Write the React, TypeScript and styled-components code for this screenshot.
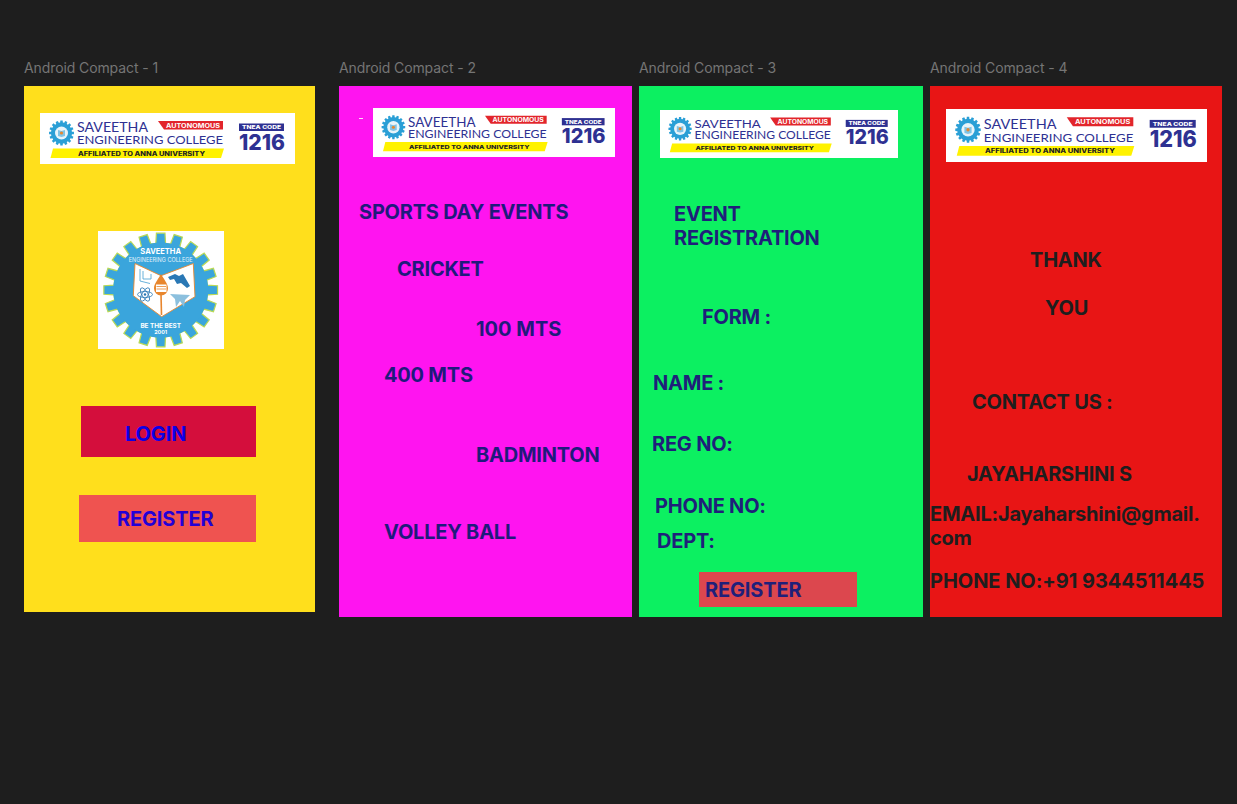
import React from 'react';
import styled, { createGlobalStyle } from 'styled-components';

const GlobalStyle = createGlobalStyle`
  html, body {
    margin: 0;
    padding: 0;
    background: #1e1e1e;
  }
  body {
    font-family: Inter, "Liberation Sans", sans-serif;
  }
`;

const Canvas = styled.div`
  display: flex;
  align-items: flex-start;
  width: 1237px;
  height: 804px;
  box-sizing: border-box;
  padding: 59px 0 0 24px;
  overflow: hidden;
  background: #1e1e1e;
`;

const Artboard = styled.div<{ $w: number; $gap: number }>`
  display: flex;
  flex-direction: column;
  flex: none;
  width: ${p => p.$w}px;
  margin-right: ${p => p.$gap}px;
`;

const FrameName = styled.div`
  height: 27px;
  font-size: 14px;
  line-height: 18px;
  letter-spacing: -0.1px;
  color: #757575;
  white-space: nowrap;
`;

const Frame = styled.section<{ $h: number; $bg: string; $ink: string }>`
  display: flex;
  flex-direction: column;
  align-items: flex-start;
  height: ${p => p.$h}px;
  background: ${p => p.$bg};
  color: ${p => p.$ink};
`;

const Caption = styled.div<{ $left: number; $top: number; $track?: number }>`
  margin: ${p => p.$top}px 0 0 ${p => p.$left}px;
  font-size: 20px;
  font-weight: 700;
  line-height: 24px;
  letter-spacing: ${p => p.$track ?? -0.22}px;
  white-space: pre;
`;

const HeaderRow = styled.div<{ $top: number }>`
  display: flex;
  align-items: flex-start;
  margin-top: ${p => p.$top}px;
`;

const Tick = styled.div`
  flex: none;
  width: 4px;
  height: 1px;
  margin: 10px 10px 0 20px;
  background: #ffd9fb;
`;

const ActionButton = styled.div<{ $left: number; $top: number; $w: number; $h: number; $bg: string; $pad: number; $drop: number; $ink: string }>`
  display: flex;
  align-items: center;
  box-sizing: border-box;
  width: ${p => p.$w}px;
  height: ${p => p.$h}px;
  margin: ${p => p.$top}px 0 0 ${p => p.$left}px;
  padding: ${p => p.$drop}px 0 0 ${p => p.$pad}px;
  background: ${p => p.$bg};
  color: ${p => p.$ink};
  font-size: 20px;
  font-weight: 700;
  letter-spacing: -0.15px;
`;

const BannerBox = styled.div<{ $left: number; $top: number; $w: number; $h: number }>`
  flex: none;
  width: ${p => p.$w}px;
  height: ${p => p.$h}px;
  margin: ${p => p.$top}px 0 0 ${p => p.$left}px;
  background: #ffffff;

  svg {
    display: block;
    width: 100%;
    height: 100%;
  }
`;

const EmblemBox = styled.div`
  flex: none;
  width: 126px;
  height: 118px;
  margin: 67px 0 0 74px;
  background: #ffffff;

  svg {
    display: block;
    width: 100%;
    height: 100%;
  }
`;

// gear outline, used big on the emblem and small on the banners
const gearPath = (cx: number, cy: number, outer: number, inner: number, teeth: number) => {
  const pts: string[] = [];
  for (let i = 0; i < teeth; i++) {
    const a = (i / teeth) * Math.PI * 2 - Math.PI / 2;
    const s = (Math.PI * 2) / teeth;
    const corners: [number, number][] = [
      [inner, a - s * 0.33],
      [outer, a - s * 0.24],
      [outer, a + s * 0.24],
      [inner, a + s * 0.33],
    ];
    corners.forEach(([r, t]) => {
      pts.push(`${(cx + r * Math.cos(t)).toFixed(2)} ${(cy + r * Math.sin(t)).toFixed(2)}`);
    });
  }
  return `M${pts.join('L')}Z`;
};

const Banner: React.FC<{ left: number; top: number; w: number; h: number }> = ({ left, top, w, h }) => (
  <BannerBox $left={left} $top={top} $w={w} $h={h}>
    <svg viewBox="0 0 255 51" preserveAspectRatio="none" fontFamily="Inter, sans-serif">
      <path d={gearPath(21.5, 20, 12.5, 10.5, 16)} fill="#2a9fd6" />
      <circle cx="21.5" cy="20" r="6.5" fill="#e8f4fa" />
      <path d="M18 17l3.5 1 3.5-1v6l-3.5 1-3.5-1z" fill="#7fc4e6" />
      <circle cx="21.5" cy="20" r="1.6" fill="#e8862e" />
      <text x="37" y="19.3" fontSize="13" fontFamily="Lato, sans-serif" fill="#2e3192" textLength="71" lengthAdjust="spacingAndGlyphs">SAVEETHA</text>
      <text x="37" y="31.3" fontSize="11.5" fontFamily="Lato, sans-serif" fill="#2e3192" textLength="146" lengthAdjust="spacingAndGlyphs">ENGINEERING COLLEGE</text>
      <polygon points="118,8 183,8 183,16.5 124,16.5" fill="#e2252b" />
      <text x="126" y="14.6" fontSize="6" fontWeight="700" fill="#ffffff" textLength="54" lengthAdjust="spacingAndGlyphs">AUTONOMOUS</text>
      <polygon points="13,35.5 184,35.5 181,45 10.5,45" fill="#fff200" />
      <text x="38" y="42.6" fontSize="5.6" fontWeight="800" fill="#222222" textLength="127" lengthAdjust="spacingAndGlyphs">AFFILIATED TO ANNA UNIVERSITY</text>
      <rect x="199" y="10.5" width="45" height="7.5" fill="#2e3192" />
      <text x="202" y="16.2" fontSize="5.2" fontWeight="800" fill="#ffffff" textLength="39" lengthAdjust="spacingAndGlyphs">TNEA CODE</text>
      <text x="199" y="36.5" fontSize="21.5" fontWeight="800" fill="#2e3192" textLength="46" lengthAdjust="spacingAndGlyphs">1216</text>
    </svg>
  </BannerBox>
);

const Emblem: React.FC = () => (
  <EmblemBox>
    <svg viewBox="0 0 126 118" fontFamily="Inter, sans-serif">
      <path d={gearPath(62.7, 59, 57, 47, 20)} fill="#3aa5dc" stroke="#b9d957" strokeWidth="1.2" />
      <circle cx="62.7" cy="59" r="47.5" fill="#3aa5dc" />
      <text x="62.7" y="23" fontSize="7.5" fontWeight="700" fill="#ffffff" textAnchor="middle">SAVEETHA</text>
      <text x="62.7" y="31" fontSize="5.6" fill="#e4f3fb" textAnchor="middle" textLength="64" lengthAdjust="spacingAndGlyphs">ENGINEERING COLLEGE</text>
      {/* open book, pages fall towards the spine */}
      <path d="M37 32.5L63 44.7 95.3 32.5 97 65.7 63.7 85.7 35.3 64.7Z" fill="#ffffff" stroke="#e8862e" strokeWidth="0.9" strokeLinejoin="round" />
      <path d="M63 43C59 50 56 53 56 57.5a7 7 0 0 0 14 0C70 53 67 50 63 43Z" fill="#e8862e" />
      <line x1="63" y1="63" x2="63.5" y2="84" stroke="#e8862e" strokeWidth="1.6" />
      <rect x="58" y="53.5" width="10.5" height="7.5" fill="#ffffff" />
      <path d="M58.5 55.5h9.5M58.5 58h9.5" stroke="#e8862e" strokeWidth="0.8" />
      <path d="M42 38v12l10 2.5M45 40v8h8v-5" fill="none" stroke="#5aa9d6" strokeWidth="0.9" />
      <ellipse cx="47" cy="63.5" rx="7.5" ry="3" fill="none" stroke="#2a78b5" strokeWidth="0.8" />
      <ellipse cx="47" cy="63.5" rx="7.5" ry="3" fill="none" stroke="#2a78b5" strokeWidth="0.8" transform="rotate(60 47 63.5)" />
      <ellipse cx="47" cy="63.5" rx="7.5" ry="3" fill="none" stroke="#2a78b5" strokeWidth="0.8" transform="rotate(120 47 63.5)" />
      <circle cx="47" cy="63.5" r="1.2" fill="#2a78b5" />
      <path d="M70 46l7-3 4 2 4-2 7 12-3 2-6-5-4 1-3-5-4 1z" fill="#2a78b5" />
      <path d="M72 63l20 1-5 5-1 7-4-6-4 6-1-8z" fill="#8cc0de" />
      <text x="62.7" y="96.5" fontSize="6.4" fontWeight="700" fill="#ffffff" textAnchor="middle">BE THE BEST</text>
      <text x="62.7" y="103" fontSize="5.4" fontWeight="700" fill="#ffffff" textAnchor="middle">2001</text>
    </svg>
  </EmblemBox>
);

const App: React.FC = () => (
  <Canvas>
    <GlobalStyle />

    <Artboard $w={291} $gap={24}>
      <FrameName>Android Compact - 1</FrameName>
      <Frame $h={526} $bg="#ffdf1c" $ink="#1e1e1e">
        <Banner left={16} top={27} w={255} h={51} />
        <Emblem />
        <ActionButton $left={57} $top={57} $w={175} $h={51} $bg="#d40e3c" $pad={44} $drop={5} $ink="#0c00e6">LOGIN</ActionButton>
        <ActionButton $left={55} $top={38} $w={177} $h={47} $bg="#ef5350" $pad={38} $drop={0} $ink="#2300d6">REGISTER</ActionButton>
      </Frame>
    </Artboard>

    <Artboard $w={293} $gap={7}>
      <FrameName>Android Compact - 2</FrameName>
      <Frame $h={531} $bg="#ff14f0" $ink="#1f1a7c">
        <HeaderRow $top={22}>
          <Tick />
          <Banner left={0} top={0} w={242} h={49} />
        </HeaderRow>
        <Caption $left={20} $top={43}>SPORTS DAY EVENTS</Caption>
        <Caption $left={58} $top={33}>CRICKET</Caption>
        <Caption $left={137} $top={36} $track={0}>100 MTS</Caption>
        <Caption $left={45} $top={22}>400 MTS</Caption>
        <Caption $left={137} $top={56}>BADMINTON</Caption>
        <Caption $left={45} $top={53}>VOLLEY BALL</Caption>
      </Frame>
    </Artboard>

    <Artboard $w={284} $gap={7}>
      <FrameName>Android Compact - 3</FrameName>
      <Frame $h={531} $bg="#0cf061" $ink="#1f1f7a">
        <Banner left={21} top={24} w={238} h={48} />
        <Caption $left={35} $top={44}>{'EVENT\nREGISTRATION'}</Caption>
        <Caption $left={63} $top={55}>FORM :</Caption>
        <Caption $left={14} $top={42}>NAME :</Caption>
        <Caption $left={13} $top={37}>REG NO:</Caption>
        <Caption $left={16} $top={38}>PHONE NO:</Caption>
        <Caption $left={18} $top={11}>DEPT:</Caption>
        <ActionButton $left={60} $top={19} $w={158} $h={35} $bg="#dc474e" $pad={6} $drop={0} $ink="#1f1f7a">REGISTER</ActionButton>
      </Frame>
    </Artboard>

    <Artboard $w={292} $gap={0}>
      <FrameName>Android Compact - 4</FrameName>
      <Frame $h={531} $bg="#e81515" $ink="#1e1e1e">
        <Banner left={16} top={23} w={261} h={53} />
        <Caption $left={100} $top={86}>THANK</Caption>
        <Caption $left={115} $top={24}>YOU</Caption>
        <Caption $left={42} $top={70}>CONTACT US :</Caption>
        <Caption $left={37} $top={48}>JAYAHARSHINI S</Caption>
        <Caption $left={0} $top={16}>{'EMAIL:Jayaharshini@gmail.\ncom'}</Caption>
        <Caption $left={0} $top={19} $track={-0.05}>PHONE NO:+91 9344511445</Caption>
      </Frame>
    </Artboard>
  </Canvas>
);

export default App;
